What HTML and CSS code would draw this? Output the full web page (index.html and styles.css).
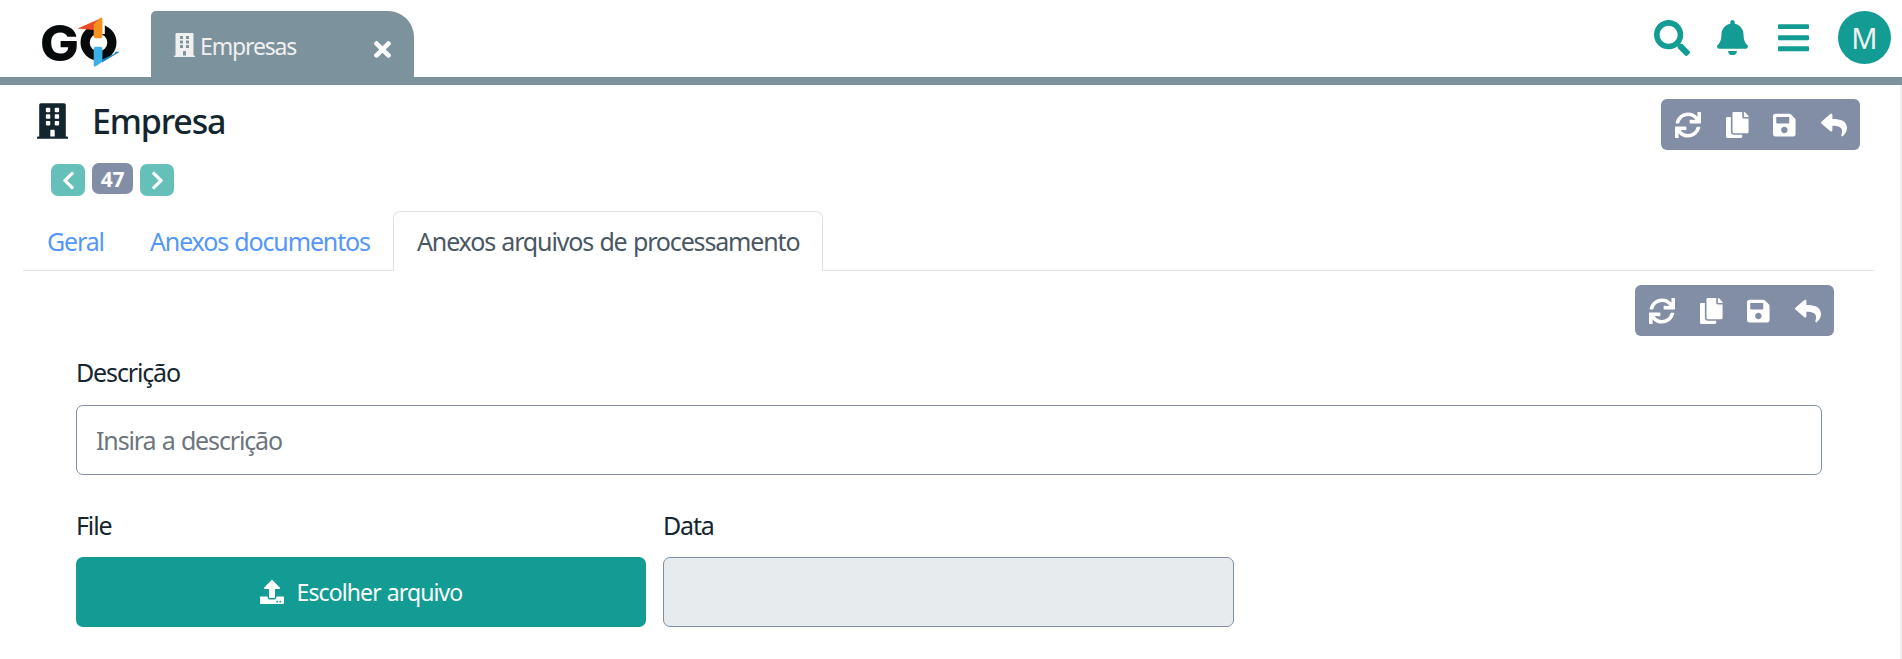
FILE: index.html
```html
<!DOCTYPE html>
<html lang="pt-BR">
<head>
<meta charset="utf-8">
<title>Empresa</title>
<link rel="stylesheet" href="styles.css">
</head>
<body>
<svg class="sprite" width="0" height="0" aria-hidden="true">
  <symbol id="building" viewBox="0 0 448 512"><path fill-rule="evenodd" d="M436 480h-20V24c0-13.3-10.7-24-24-24H56C42.7 0 32 10.700 32 24v456H12c-6.600 0-12 5.400-12 12v20h448v-20c0-6.600-5.400-12-12-12zM140 64h40a12 12 0 0 1 12 12v40a12 12 0 0 1-12 12h-40a12 12 0 0 1-12-12V76a12 12 0 0 1 12-12zm128 0h40a12 12 0 0 1 12 12v40a12 12 0 0 1-12 12h-40a12 12 0 0 1-12-12V76a12 12 0 0 1 12-12zM140 160h40a12 12 0 0 1 12 12v40a12 12 0 0 1-12 12h-40a12 12 0 0 1-12-12v-40a12 12 0 0 1 12-12zm128 0h40a12 12 0 0 1 12 12v40a12 12 0 0 1-12 12h-40a12 12 0 0 1-12-12v-40a12 12 0 0 1 12-12zM140 256h40a12 12 0 0 1 12 12v40a12 12 0 0 1-12 12h-40a12 12 0 0 1-12-12v-40a12 12 0 0 1 12-12zm128 0h40a12 12 0 0 1 12 12v40a12 12 0 0 1-12 12h-40a12 12 0 0 1-12-12v-40a12 12 0 0 1 12-12zM204 384h40a12 12 0 0 1 12 12v84h-64v-84a12 12 0 0 1 12-12z"/></symbol>
  <symbol id="times" viewBox="0 80 352 352"><path d="M242.720 256l100.070-100.070c12.280-12.280 12.280-32.190 0-44.480l-22.240-22.240c-12.280-12.280-32.190-12.280-44.480 0L176 189.280 75.930 89.210c-12.280-12.280-32.190-12.280-44.480 0L9.210 111.450c-12.280 12.280-12.280 32.190 0 44.480L109.280 256 9.210 356.070c-12.280 12.280-12.280 32.190 0 44.480l22.240 22.240c12.280 12.280 32.200 12.280 44.480 0L176 322.720l100.070 100.070c12.280 12.280 32.200 12.280 44.480 0l22.240-22.240c12.280-12.280 12.280-32.190 0-44.480L242.720 256z"/></symbol>
  <symbol id="search" viewBox="0 0 512 512"><path d="M505 442.700L405.300 343c-4.500-4.500-10.600-7-17-7H372c27.600-35.300 44-79.700 44-128C416 93.100 322.900 0 208 0S0 93.100 0 208s93.100 208 208 208c48.300 0 92.700-16.400 128-44v16.300c0 6.400 2.500 12.500 7 17l99.700 99.700c9.400 9.400 24.600 9.400 33.900 0l28.300-28.300c9.400-9.400 9.400-24.600.1-34zM208 336c-70.700 0-128-57.200-128-128 0-70.700 57.200-128 128-128 70.700 0 128 57.200 128 128 0 70.700-57.200 128-128 128z"/></symbol>
  <symbol id="bell" viewBox="0 0 448 512"><path d="M224 512c35.320 0 63.970-28.650 63.970-64H160.030c0 35.350 28.650 64 63.970 64zm215.390-149.710c-19.320-20.760-55.470-51.990-55.470-154.290 0-77.700-54.480-139.900-127.940-155.160V32c0-17.670-14.320-32-31.980-32s-31.980 14.330-31.980 32v20.840C118.560 68.100 64.080 130.300 64.080 208c0 102.300-36.150 133.530-55.470 154.290-6 6.450-8.660 14.160-8.610 21.710.11 16.400 12.980 32 32.100 32h383.800c19.120 0 32-15.600 32.100-32 .05-7.550-2.610-15.270-8.610-21.710z"/></symbol>
  <symbol id="bars" viewBox="0 0 448 512"><path d="M16 132h416c8.840 0 16-7.160 16-16V76c0-8.840-7.160-16-16-16H16C7.160 60 0 67.160 0 76v40c0 8.840 7.160 16 16 16zm0 160h416c8.840 0 16-7.160 16-16v-40c0-8.840-7.160-16-16-16H16c-8.840 0-16 7.160-16 16v40c0 8.840 7.160 16 16 16zm0 160h416c8.840 0 16-7.160 16-16v-40c0-8.840-7.160-16-16-16H16c-8.840 0-16 7.160-16 16v40c0 8.840 7.160 16 16 16z"/></symbol>
  <symbol id="sync" viewBox="0 0 512 512"><path d="M440.650 12.570l4 82.770A247.160 247.160 0 0 0 255.830 8C134.730 8 33.910 94.920 12.290 209.820A12 12 0 0 0 24.090 224h49.050a12 12 0 0 0 11.670-9.260 175.910 175.910 0 0 1 317-56.940l-101.460-4.860a12 12 0 0 0-12.570 12v47.410a12 12 0 0 0 12 12H500a12 12 0 0 0 12-12V12a12 12 0 0 0-12-12h-47.370a12 12 0 0 0-11.980 12.570zM255.830 432a175.610 175.610 0 0 1-146-77.800l101.800 4.870a12 12 0 0 0 12.570-12v-47.400a12 12 0 0 0-12-12H12a12 12 0 0 0-12 12V500a12 12 0 0 0 12 12h47.350a12 12 0 0 0 12-12.600l-4.150-82.570A247.170 247.170 0 0 0 255.830 504c121.110 0 221.930-86.920 243.550-201.820a12 12 0 0 0-11.800-14.180h-49.050a12 12 0 0 0-11.670 9.260A175.860 175.860 0 0 1 255.830 432z"/></symbol>
  <symbol id="copy" viewBox="0 0 448 512"><path d="M320 448v40c0 13.255-10.745 24-24 24H24c-13.255 0-24-10.745-24-24V120c0-13.255 10.745-24 24-24h72v296c0 30.879 25.121 56 56 56h168zm0-344V0H152c-13.255 0-24 10.745-24 24v368c0 13.255 10.745 24 24 24h272c13.255 0 24-10.745 24-24V128H344c-13.200 0-24-10.800-24-24zm120.971-31.029L375.029 7.029A24 24 0 0 0 358.059 0H352v96h96v-6.059a24 24 0 0 0-7.029-16.970z"/></symbol>
  <symbol id="save" viewBox="0 0 448 512"><path d="M433.941 129.941l-83.882-83.882A48 48 0 0 0 316.118 32H48C21.490 32 0 53.490 0 80v352c0 26.510 21.490 48 48 48h352c26.510 0 48-21.490 48-48V163.882a48 48 0 0 0-14.059-33.941zM224 416c-35.346 0-64-28.654-64-64 0-35.346 28.654-64 64-64s64 28.654 64 64c0 35.346-28.654 64-64 64zm96-304.520V212c0 6.627-5.373 12-12 12H76c-6.627 0-12-5.373-12-12V108c0-6.627 5.373-12 12-12h228.520c3.183 0 6.235 1.264 8.485 3.515l3.480 3.480A11.996 11.996 0 0 1 320 111.480z"/></symbol>
  <symbol id="reply" viewBox="0 0 512 512"><path d="M8.309 189.836L184.313 37.851C199.719 24.546 224 35.347 224 56.015v80.053c160.629 1.839 288 34.032 288 186.258 0 61.441-39.581 122.309-83.333 154.132-13.653 9.931-33.111-2.533-28.077-18.631 45.344-145.012-21.507-183.510-176.590-185.742V360c0 20.700-24.300 31.453-39.687 18.164l-176.004-152c-11.071-9.562-11.086-26.753 0-36.328z"/></symbol>
  <symbol id="chevron" viewBox="0 0 320 512"><path d="M34.520 239.030L228.870 44.690c9.370-9.370 24.570-9.370 33.940 0l22.670 22.670c9.360 9.360 9.370 24.520.04 33.900L131.490 256l154.020 154.750c9.340 9.380 9.320 24.540-.04 33.900l-22.670 22.670c-9.370 9.370-24.570 9.370-33.940 0L34.520 272.970c-9.370-9.370-9.370-24.570 0-33.940z"/></symbol>
  <symbol id="upload" viewBox="0 0 512 512"><path d="M296 384h-80c-13.300 0-24-10.700-24-24V192h-87.700c-17.800 0-26.700-21.500-14.100-34.100L242.300 5.700c7.500-7.500 19.800-7.500 27.300 0l152.200 152.200c12.600 12.600 3.700 34.100-14.100 34.100H320v168c0 13.300-10.700 24-24 24zm216-8v112c0 13.300-10.700 24-24 24H24c-13.300 0-24-10.700-24-24V376c0-13.300 10.700-24 24-24h136v8c0 30.900 25.100 56 56 56h80c30.900 0 56-25.100 56-56v-8h136c13.300 0 24 10.700 24 24zm-124 88c0-11-9-20-20-20s-20 9-20 20 9 20 20 20 20-9 20-20zm64 0c0-11-9-20-20-20s-20 9-20 20 9 20 20 20 20-9 20-20z"/></symbol>
</svg>

<header class="topbar">
  <svg class="logo" viewBox="0 0 82 60" role="img" aria-label="GO">
    <text class="logo-g" x="0" y="48.500" textLength="39" lengthAdjust="spacingAndGlyphs">G</text>
    <circle cx="58.500" cy="30.500" r="13.400" fill="none" stroke="#060a0a" stroke-width="9.200"/>
    <path d="M62 8h2.800v14H62zM53.700 24h8.600v12h-8.600z" fill="#fff"/>
    <path d="M37.500 16.400 61 6.200l-5 7.300-2.300 4.500z" fill="#ee4a28"/>
    <path d="M53.700 12.500 60 6.200q2.400-1.600 2.400 1v17q0 2-2 2h-4.700q-2 0-2-2z" fill="#f69220"/>
    <path d="M79.800 39.700 62 50.500v-3l12-5.500 1.500-2.300z" fill="#1b7fb4"/>
    <path d="M53.700 36.700q0-2 2-2h4.700q2 0 2 2V48q0 1.800-1.500 2.800l-4.700 3.200q-2.500 1.400-2.500-1z" fill="#3bb0e8"/>
  </svg>
  <div class="app-tab">
    <svg class="app-tab-icon"><use href="#building"/></svg>
    <span class="app-tab-label">Empresas</span>
    <svg class="app-tab-close"><use href="#times"/></svg>
  </div>
  <div class="actions">
    <svg class="act-search"><use href="#search"/></svg>
    <svg class="act-bell"><use href="#bell"/></svg>
    <svg class="act-bars"><use href="#bars"/></svg>
    <div class="avatar">M</div>
  </div>
</header>

<main class="page">
  <div class="heading">
    <svg class="heading-icon"><use href="#building"/></svg>
    <h1 class="title">Empresa</h1>
    <div class="toolbar">
      <svg class="w-full"><use href="#sync"/></svg>
      <svg class="w-narrow"><use href="#copy"/></svg>
      <svg class="w-narrow"><use href="#save"/></svg>
      <svg class="w-full"><use href="#reply"/></svg>
    </div>
  </div>
  <div class="pager">
    <button class="pager-btn"><svg><use href="#chevron"/></svg></button>
    <span class="pager-count">47</span>
    <button class="pager-btn next"><svg><use href="#chevron"/></svg></button>
  </div>
  <nav class="tabs">
    <a class="tab tab-geral">Geral</a>
    <a class="tab tab-docs">Anexos documentos</a>
    <a class="tab active">Anexos arquivos de processamento</a>
  </nav>
  <section class="panel">
    <div class="toolbar">
      <svg class="w-full"><use href="#sync"/></svg>
      <svg class="w-narrow"><use href="#copy"/></svg>
      <svg class="w-narrow"><use href="#save"/></svg>
      <svg class="w-full"><use href="#reply"/></svg>
    </div>
    <div class="form">
      <div class="field wide">
        <label class="label" for="descricao">Descrição</label>
        <input class="input" id="descricao" type="text" placeholder="Insira a descrição">
      </div>
      <div class="field">
        <span class="label">File</span>
        <button class="upload"><svg><use href="#upload"/></svg><span>Escolher arquivo</span></button>
      </div>
      <div class="field">
        <label class="label" for="data">Data</label>
        <input class="input" id="data" type="text" disabled>
      </div>
    </div>
  </section>
</main>
</body>
</html>
```

FILE: styles.css
```css
* { box-sizing: border-box; }
body {
  margin: 0;
  height: 659px;
  overflow: hidden;
  background: #fff;
  color: #13262f;
  font-family: "Noto Sans", "Open Sans", sans-serif;
  font-size: 25px;
  letter-spacing: -1.150px;
  word-spacing: 1px;
}
svg { display: block; fill: currentColor; flex: none; }
.sprite { display: none; }
button { border: 0; padding: 0; font: inherit; letter-spacing: inherit; word-spacing: inherit; color: #fff; }

.topbar {
  display: flex;
  align-items: flex-end;
  height: 85px;
  padding: 0 11px 0 40px;
  border-bottom: 8px solid #7c929d;
}
.logo { width: 82px; height: 60px; margin-bottom: 5px; overflow: visible; }
.logo-g { font: 800 49px Inter, sans-serif; letter-spacing: 0; fill: #060a0a; }
.app-tab {
  display: flex;
  align-items: center;
  width: 263px;
  height: 66px;
  margin-left: 29px;
  padding: 4px 23px 0 23px;
  border-radius: 5px 26px 0 0;
  background: #7c929d;
  color: #f0f0f0;
  font-size: 23px;
}
.app-tab-icon { width: 21px; height: 24px; margin-bottom: 2px; }
.app-tab-label { margin: 0 0 1px 5px; }
.app-tab-close { width: 17px; height: 17px; margin: 6px 0 0 auto; color: #fff; }
.actions {
  display: flex;
  align-items: center;
  height: 77px;
  padding-bottom: 2px;
  margin-left: auto;
  color: #129c93;
}
.act-search { width: 36px; height: 36px; margin-right: 27px; }
.act-bell { width: 31px; height: 35.400px; margin-right: 30px; }
.act-bars { width: 31px; height: 35.400px; margin-right: 29px; }
.avatar {
  display: grid;
  place-items: center;
  width: 53px;
  height: 53px;
  border-radius: 50%;
  background: #129c93;
  color: #f0f0f0;
  font-size: 29px;
  letter-spacing: 0;
}

.page {
  height: 574px;
  padding: 14px 26px 0 23px;
  border-right: 2px solid #f0f0f0;
}
.heading { display: flex; align-items: flex-start; height: 64px; padding: 0 14px; }
.heading-icon { width: 31px; height: 36px; margin-top: 4px; }
.title {
  margin: 0 auto 0 24px;
  font-size: 34px;
  line-height: 45px;
  font-weight: 500;
}
.toolbar {
  display: flex;
  align-items: center;
  justify-content: space-between;
  width: 199px;
  height: 51px;
  padding: 0 13px 0 14px;
  border-radius: 6px;
  background: #828ea6;
  color: #fff;
}
.w-full { width: 26px; height: 26px; }
.w-narrow { width: 22.750px; height: 26px; }

.pager { display: flex; gap: 7px; height: 48px; padding-left: 28px; }
.pager-btn {
  display: grid;
  place-items: center;
  width: 34px;
  height: 32px;
  margin-top: 1px;
  border-radius: 7px;
  background: #65c0b9;
}
.pager-btn svg { width: 13px; height: 21px; }
.next svg { transform: scaleX(-1); }
.pager-count {
  width: 41px;
  height: 31px;
  border-radius: 7px;
  background: #828ea6;
  color: #fff;
  font-size: 21px;
  font-weight: 700;
  line-height: 33px;
  letter-spacing: -0.300px;
  text-align: center;
}

.tabs { display: flex; height: 60px; border-bottom: 1px solid #dee2e6; }
.tab {
  height: 60px;
  padding: 0 23px;
  border: 1px solid transparent;
  line-height: 58px;
  color: #5497f8;
  white-space: nowrap;
}
.tab-geral { width: 103px; }
.tab-docs { width: 267px; }
.active {
  width: 430px;
  border-color: #dee2e6 #dee2e6 #fff;
  border-radius: 7px 7px 0 0;
  background: #fff;
  color: #495763;
}

.panel { padding: 14px 40px 0 53px; }
.panel .toolbar { margin-left: auto; }
.form {
  display: grid;
  grid-template-columns: 570px 571px 1fr;
  gap: 35px 17px;
  margin: 18px 12px 0 0;
}
.wide { grid-column: 1 / -1; }
.field { display: flex; flex-direction: column; }
.label { height: 51px; line-height: 37px; }
.field:not(.wide) .label { height: 47px; line-height: 31px; }
.input {
  width: 100%;
  height: 70px;
  padding: 0 19px;
  border: 1px solid #828ea6;
  border-radius: 7px;
  background: #fff;
  font: inherit;
  letter-spacing: inherit;
  word-spacing: inherit;
  color: #495763;
}
.input::placeholder { color: #6c757d; opacity: 1; }
.input:disabled { background: #e7ebee; }
.upload {
  display: flex;
  align-items: center;
  justify-content: center;
  gap: 13px;
  height: 70px;
  border-radius: 7px;
  background: #129c93;
  font-size: 23px;
  letter-spacing: -0.900px;
}
.upload svg { width: 24px; height: 24px; }
```
